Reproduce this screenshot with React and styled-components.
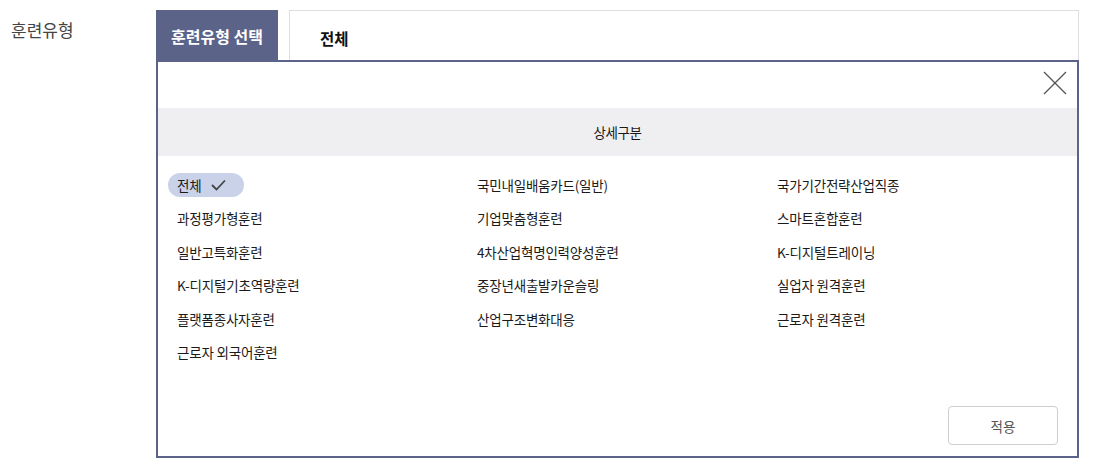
import React from 'react';
import styled, { createGlobalStyle } from 'styled-components';

const GlobalStyle = createGlobalStyle`
  body {
    margin: 0;
    background: #fff;
    font-family: "Noto Sans CJK KR", "Noto Sans", sans-serif;
    color: #222;
  }
`;

const Page = styled.div`
  display: flex;
  padding-top: 10px;
  width: 1093px;
`;

const FieldLabel = styled.div`
  width: 145px;
  padding-left: 11px;
  padding-top: 8px;
  font-size: 17px;
  color: #444;
  line-height: 24px;
`;

const FieldBody = styled.div`
  width: 923px;
  display: flex;
  flex-direction: column;
`;

const SelectRow = styled.div`
  display: flex;
  height: 50px;
  gap: 11px;
`;

const TabButton = styled.div`
  width: 122px;
  background: #5b6389;
  color: #fff;
  font-size: 16px;
  font-weight: 700;
  display: flex;
  align-items: center;
  justify-content: center;
  padding-top: 2px;
  box-sizing: border-box;
`;

const ValueBox = styled.div`
  flex: 1;
  border: 1px solid #dedede;
  border-bottom: none;
  display: flex;
  align-items: center;
  padding-left: 30px;
  padding-top: 4px;
  font-size: 15.5px;
  font-weight: 600;
  color: #111;
`;

const Panel = styled.div`
  border: 2px solid #5b6389;
  display: flex;
  flex-direction: column;
`;

const CloseRow = styled.div`
  height: 46px;
  display: flex;
  justify-content: flex-end;
  align-items: flex-start;
  padding: 9px 10px 0 0;
  box-sizing: border-box;
`;

const CloseButton = styled.button`
  width: 24px;
  height: 24px;
  padding: 0;
  border: none;
  background: none;
  cursor: pointer;
`;

const SectionHeader = styled.div`
  height: 48px;
  background: #efeff1;
  display: flex;
  align-items: center;
  justify-content: center;
  font-size: 13.5px;
  letter-spacing: -0.4px;
  color: #1a1a1a;
`;

const OptionGrid = styled.div`
  display: grid;
  grid-template-columns: repeat(3, 300px);
  grid-auto-rows: 33.5px;
  padding: 12px 0 0 10px;
`;

const Option = styled.div`
  display: flex;
  align-items: center;
`;

const OptionLabel = styled.span`
  display: inline-flex;
  align-items: center;
  height: 24px;
  padding: ${p => (p.selected ? '0 18px 0 9px' : '0 9px')};
  border-radius: 12px;
  background: ${p => (p.selected ? '#c9d2e8' : 'transparent')};
  font-size: 13.5px;
  letter-spacing: -0.2px;
  color: #1a1a1a;
  white-space: pre;
  cursor: pointer;

  svg {
    margin-left: 10px;
  }
`;

const Footer = styled.div`
  display: flex;
  justify-content: flex-end;
  padding: 37px 19px 11px 0;
`;

const ApplyButton = styled.button`
  width: 110px;
  height: 39px;
  border: 1px solid #cfcfcf;
  border-radius: 4px;
  background: #fff;
  font-family: inherit;
  font-size: 13.5px;
  color: #555;
  cursor: pointer;
`;

const options = [
  '전체',
  '국민내일배움카드(일반)',
  '국가기간전략산업직종',
  '과정평가형훈련',
  '기업맞춤형훈련',
  '스마트혼합훈련',
  '일반고특화훈련',
  '4차산업혁명인력양성훈련',
  'K-디지털트레이닝',
  'K-디지털기초역량훈련',
  '중장년새출발카운슬링',
  '실업자 원격훈련',
  '플랫폼종사자훈련',
  '산업구조변화대응',
  '근로자 원격훈련',
  '근로자 외국어훈련',
];

const CheckIcon = () => (
  <svg width="15" height="12" viewBox="0 0 15 12">
    <polyline points="1,6 5.5,10.5 14,1.5" fill="none" stroke="#444" strokeWidth="1.8" />
  </svg>
);

const CloseIcon = () => (
  <svg width="24" height="24" viewBox="0 0 24 24">
    <line x1="1" y1="1" x2="23" y2="23" stroke="#555" strokeWidth="1.3" />
    <line x1="23" y1="1" x2="1" y2="23" stroke="#555" strokeWidth="1.3" />
  </svg>
);

const App = () => {
  const [selected, setSelected] = React.useState('전체');

  return (
    <>
      <GlobalStyle />
      <Page>
        <FieldLabel>훈련유형</FieldLabel>
        <FieldBody>
          <SelectRow>
            <TabButton>훈련유형 선택</TabButton>
            <ValueBox>{selected}</ValueBox>
          </SelectRow>
          <Panel>
            <CloseRow>
              <CloseButton aria-label="닫기">
                <CloseIcon />
              </CloseButton>
            </CloseRow>
            <SectionHeader>상세구분</SectionHeader>
            <OptionGrid>
              {options.map(name => (
                <Option key={name}>
                  <OptionLabel selected={selected === name} onClick={() => setSelected(name)}>
                    {name}
                    {selected === name && <CheckIcon />}
                  </OptionLabel>
                </Option>
              ))}
            </OptionGrid>
            <Footer>
              <ApplyButton>적용</ApplyButton>
            </Footer>
          </Panel>
        </FieldBody>
      </Page>
    </>
  );
};

export default App;
